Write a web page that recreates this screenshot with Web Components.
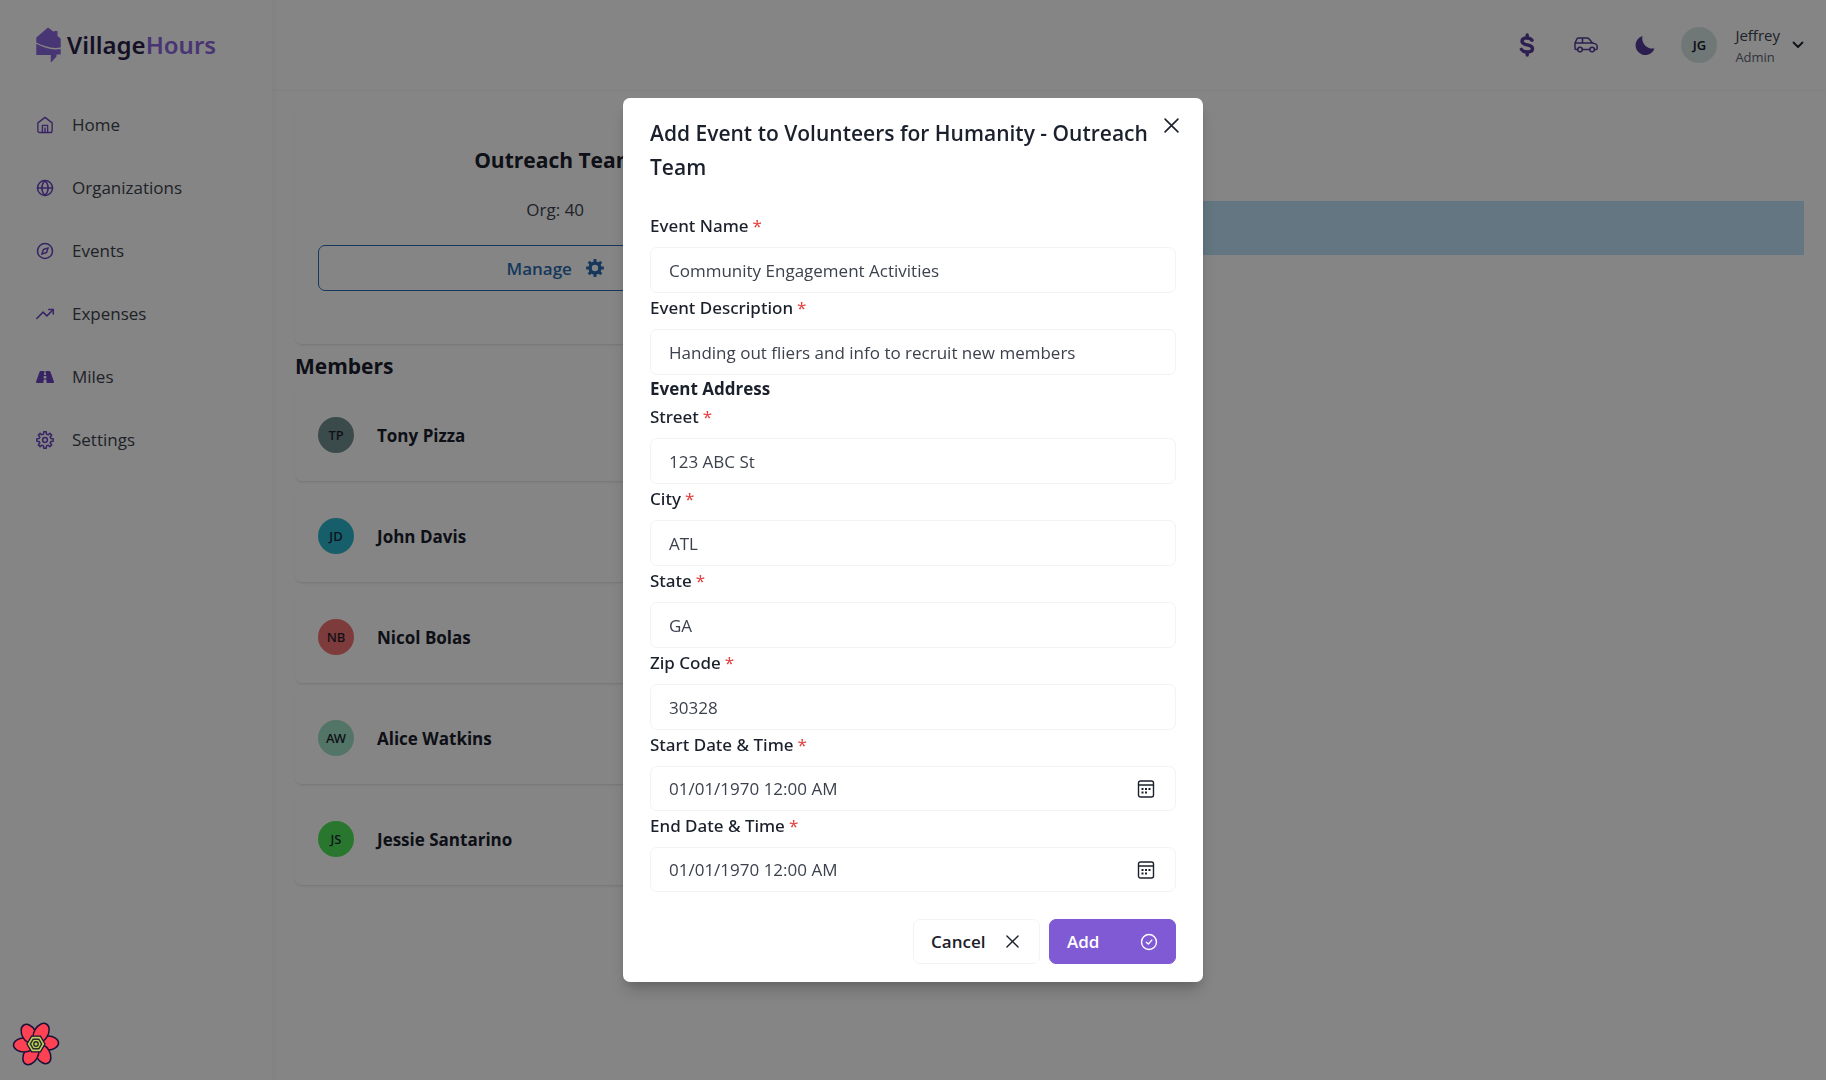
<!DOCTYPE html>
<html lang="en">
<head>
<meta charset="utf-8">
<title>VillageHours</title>
<style>
html, body { margin: 0; min-height: 100%; background: #fff; }
body { font: 17px/27px "Open Sans", "Noto Sans", sans-serif; color: #1a202c; }
</style>
</head>
<body>
<vh-app></vh-app>
<script>
const reset = `*{box-sizing:border-box} button,input{font:inherit;color:inherit;margin:0} button{cursor:pointer} h1,h2,h3,p,ul{margin:0;padding:0}`;

function define(name, render) {
  customElements.define(name, class extends HTMLElement {
    connectedCallback() {
      if (this.shadowRoot) return;
      this.attachShadow({ mode: 'open' }).innerHTML = render(this);
    }
  });
}

// Outline of an eight-toothed cog centred on 12,12.
function cog(outer, inner) {
  const points = [];
  for (let tooth = 0; tooth < 8; tooth++) {
    for (const [offset, radius] of [[-14, inner], [-9, outer], [9, outer], [14, inner]]) {
      const angle = (tooth * 45 + offset) * Math.PI / 180;
      points.push((12 + radius * Math.cos(angle)).toFixed(2) + ' ' + (12 + radius * Math.sin(angle)).toFixed(2));
    }
  }
  return 'M' + points.join('L') + 'z';
}

const line = 'fill="none" stroke="currentColor" stroke-linecap="round" stroke-linejoin="round"';
const icons = {
  home: ['0 0 24 24', `<g ${line} stroke-width="1.8"><path d="M2.5 9.2 12 1.8l9.500 7.400V19.500a2.500 2.500 0 0 1-2.500 2.500H5a2.500 2.500 0 0 1-2.500-2.500z"/><path d="M8.500 22v-9.500h7V22M12 16v6"/></g>`],
  globe: ['0 0 24 24', `<g ${line} stroke-width="2"><circle cx="12" cy="12" r="10"/><path d="M2 12h20M12 2c3 3 4.200 6.500 4.200 10S15 19 12 22c-3-3-4.200-6.500-4.200-10S9 5 12 2z"/></g>`],
  compass: ['0 0 24 24', `<g ${line} stroke-width="2"><circle cx="12" cy="12" r="10"/><path d="m16.200 7.800-2.100 6.300-6.300 2.100 2.100-6.300z"/></g>`],
  trend: ['0 0 24 24', `<g ${line} stroke-width="2"><path d="m1 18 8.500-8.500 5 5L23 6"/><path d="M17 6h6v6"/></g>`],
  road: ['0 0 576 512', `<path fill="currentColor" d="M573 402 461 88c-5-15-19-24-33-24H307l5 48c0 5-4 8-8 8h-32c-4 0-8-3-8-8l5-48H148c-14 0-28 9-33 24L3 402c-9 22 7 46 31 46h201l10-98c1-8 8-14 16-14h54c8 0 15 6 16 14l10 98h201c24 0 40-24 31-46zM260 136c0-5 4-8 8-8h40c4 0 8 3 8 8l4 43c1 7-4 13-11 13h-42c-7 0-12-6-11-13zm62 168h-68c-8 0-14-7-13-14l5-54c1-7 6-12 13-12h58c7 0 12 5 13 12l5 54c1 7-5 14-13 14z"/>`],
  settings: ['0 0 24 24', `<g ${line} stroke-width="2"><circle cx="12" cy="12" r="3.200"/><path d="${cog(11, 8)}"/></g>`],
  gear: ['0 0 24 24', `<path fill="none" stroke="currentColor" stroke-width="4.500" d="M12 5.500a6.500 6.500 0 1 1 0 13 6.500 6.500 0 0 1 0-13z"/><path fill="currentColor" fill-rule="evenodd" d="${cog(12, 8.5)}M12 7a5 5 0 1 0 0 10 5 5 0 0 0 0-10z"/>`],
  dollar: ['0 0 16 24', `<g ${line} stroke-width="3.400"><path d="M13 7.200C11.800 5.600 10 4.900 7.800 4.900 5 4.900 3 6.200 3 8.300c0 5 10.500 2.300 10.500 7.300 0 2.200-2.200 3.500-5.200 3.500-2.600 0-4.700-.9-5.900-2.700"/><path d="M8.200 2v3M8.200 19v3"/></g>`],
  car: ['0 0 24 16', `<g ${line} stroke-width="1.500"><path d="M3.600 12.500H2A1 1 0 0 1 1 11.500V6l2-4.200C3.300 1.200 3.900 1 4.500 1h8.800c.6 0 1 .2 1.400.6L18.500 6l3 .9c1 .4 1.600 1.200 1.600 2.200v2.400a1 1 0 0 1-1 1h-1.600M8.400 12.500h7.300M1.200 6h17.300M8.500 1.200V6"/><circle cx="6" cy="12.500" r="2.300"/><circle cx="18.100" cy="12.500" r="2.300"/></g>`],
  moon: ['0 0 20 20', `<path fill="currentColor" d="M7.600 1A10 10 0 0 0 19.500 13.300 9.700 9.700 0 1 1 7.600 1z"/>`],
  chevron: ['0 0 12 8', `<path ${line} stroke-width="1.800" d="m1.500 1.500 4.500 4.500 4.500-4.500"/>`],
  close: ['0 0 14 14', `<path ${line} stroke-width="1.500" d="m1 1 12 12M13 1 1 13"/>`],
  check: ['0 0 18 18', `<g ${line} stroke-width="1.400"><circle cx="9" cy="9" r="7.500"/><path d="m6.300 9.200 2 1.900 3.500-4"/></g>`],
  calendar: ['0 0 18 18', `<rect x="1.500" y="1" width="15" height="16" rx="2" ${line} stroke-width="1.400"/><path ${line} stroke-width="1.400" d="M2 5h14"/><g fill="currentColor"><rect x="8" y="8" width="2" height="2"/><rect x="11.500" y="8" width="2" height="2"/><rect x="4.500" y="11.500" width="2" height="2"/><rect x="8" y="11.500" width="2" height="2"/><rect x="4.500" y="8" width="2" height="2"/></g>`]
};

define('vh-icon', el => {
  const [box, art] = icons[el.getAttribute('name')];
  return `<style>:host{display:inline-flex;flex:none;width:18px;height:18px} svg{width:100%;height:100%;display:block}</style><svg viewBox="${box}" aria-hidden="true">${art}</svg>`;
});

define('vh-avatar', el => `<style>
:host{display:flex;flex:none;align-items:center;justify-content:center;width:36px;height:36px;border-radius:50%;background:${el.getAttribute('color')};font:${el.getAttribute('weight') || 500} 13px/18px "Noto Sans","Open Sans",sans-serif;color:#1a202c}
</style><slot></slot>`);

define('vh-logo', () => `<style>
:host{display:flex;align-items:center;gap:6px;font:600 24px/36px "Noto Sans","Open Sans",sans-serif;color:#2a1f4a}
svg{width:25px;height:36px;flex:none} b{font-weight:600;color:#8b66dc}
</style>
<svg viewBox="0 0 25 36" aria-hidden="true"><path fill="#8b66dc" d="M.3 10.500 12 .5l6 4.500V4h3.500v5l3.200 2.500V20.500C15.500 22 8.500 19.500.3 15.600z"/><path fill="#8b66dc" d="M.3 16.700C8.500 21 16 23.500 24.700 21.900V27.500h-4.200v2L15.600 35h-.8v-7H.3z"/></svg>
<span>Village<b>Hours</b></span>`);

define('vh-nav-link', el => `<style>${reset}
:host{display:block}
a{display:flex;align-items:center;gap:18px;height:63px;padding-left:36px;color:#3c424d;text-decoration:none}
vh-icon{color:#6b46c1}
</style><a href="#"><vh-icon name="${el.getAttribute('icon')}"></vh-icon><slot></slot></a>`);

define('vh-sidebar', () => `<style>${reset}
:host{display:block;width:272px;flex:none;border-right:1px solid #f8f9fb;box-shadow:1px 0 5px rgba(0,0,0,.04)}
.brand{height:90px;padding-left:36px;display:flex;align-items:center}
nav{padding-top:3px}
</style>
<div class="brand"><vh-logo></vh-logo></div>
<nav>
<vh-nav-link icon="home">Home</vh-nav-link>
<vh-nav-link icon="globe">Organizations</vh-nav-link>
<vh-nav-link icon="compass">Events</vh-nav-link>
<vh-nav-link icon="trend">Expenses</vh-nav-link>
<vh-nav-link icon="road">Miles</vh-nav-link>
<vh-nav-link icon="settings">Settings</vh-nav-link>
</nav>`);

define('vh-topbar', () => `<style>${reset}
:host{display:flex;align-items:center;justify-content:flex-end;height:90px;padding-right:22px;border-bottom:1px solid #f4f6f8}
button{border:0;background:none;padding:0;display:flex;align-items:center;text-align:left}
.tool{width:59px;height:45px;justify-content:center;color:#553c9a}
.user{gap:18px;margin-left:7px}
.who{display:block}
.name{display:block;font-size:15px;line-height:24px;color:#3c424d}
.role{display:block;font-size:13px;line-height:20px;color:#5c6675}
.menu{gap:12px;display:flex;align-items:center}
.dollar{width:16px;height:24px}.car{width:24px;height:16px}.moon{width:20px;height:20px}.chev{width:12px;height:8px;color:#1a202c}
</style>
<button class="tool" aria-label="Expenses"><vh-icon class="dollar" name="dollar"></vh-icon></button>
<button class="tool" aria-label="Mileage"><vh-icon class="car" name="car"></vh-icon></button>
<button class="tool" aria-label="Dark mode"><vh-icon class="moon" name="moon"></vh-icon></button>
<button class="user"><vh-avatar color="#d7e7e4" weight="600">JG</vh-avatar>
<span class="menu"><span class="who"><span class="name">Jeffrey</span><span class="role">Admin</span></span><vh-icon class="chev" name="chevron"></vh-icon></span></button>`);

define('vh-member', el => `<style>
:host{display:flex;align-items:center;gap:23px;height:93px;padding:0 23px;border-radius:7px;border-bottom:1px solid #e6e9ed;box-shadow:0 1px 2px rgba(0,0,0,.05);font-weight:700}
</style><vh-avatar color="${el.getAttribute('color')}">${el.getAttribute('initials')}</vh-avatar><slot></slot>`);

define('vh-team', () => `<style>${reset}
:host{display:block}
.card{display:flex;flex-direction:column;align-items:stretch;text-align:center;height:236px;padding:34px 23px 0;border-bottom:1px solid #e6e9ed;border-radius:7px;box-shadow:0 1px 2px rgba(0,0,0,.05)}
h2{font-size:21px;line-height:34px;font-weight:700}
p{margin-top:19px;color:#3c424d}
button{margin-top:22px;height:46px;border:1px solid #2b6cb0;border-radius:7px;background:none;color:#2b6cb0;font-weight:600;display:flex;align-items:center;justify-content:center;gap:14px}
h3{font-size:21px;line-height:34px;font-weight:700;margin:4px 0 6px}
.list{display:flex;flex-direction:column;gap:8px}
</style>
<section class="card"><h2>Outreach Team</h2><p>Org: 40</p><button>Manage <vh-icon name="gear"></vh-icon></button></section>
<h3>Members</h3>
<div class="list">
<vh-member initials="TP" color="#718e8e">Tony Pizza</vh-member>
<vh-member initials="JD" color="#2bb5cc">John Davis</vh-member>
<vh-member initials="NB" color="#f07171">Nicol Bolas</vh-member>
<vh-member initials="AW" color="#9de0c8">Alice Watkins</vh-member>
<vh-member initials="JS" color="#4fe55a">Jessie Santarino</vh-member>
</div>`);

define('vh-field', el => {
  const date = el.hasAttribute('date');
  return `<style>${reset}
:host{display:block}
label{display:block;font:500 17px/29px "Noto Sans","Open Sans",sans-serif;margin-bottom:7px}
i{font-style:normal;font-weight:400;color:#e53e3e;margin-left:4px}
.box{display:flex;align-items:center;height:46px;border:1px solid #f1f3f6;border-radius:7px;padding:0 18px}
:host([date]) .box{height:45px}
input{flex:1;min-width:0;border:0;outline:0;padding:0;background:none;height:27px;color:#3c424d}
button{border:0;background:none;padding:0 2px;display:flex;color:#1a202c}
</style>
<label for="f">${el.getAttribute('label')}<i aria-hidden="true">*</i></label>
<div class="box"><input id="f" type="text" required value="${el.getAttribute('value')}">${date ? '<button type="button" aria-label="Open calendar"><vh-icon name="calendar"></vh-icon></button>' : ''}</div>`;
});

define('vh-button', el => `<style>${reset}
:host{display:block}
button{display:flex;align-items:center;justify-content:space-between;width:127px;height:45px;padding:0 17px;border:1px solid #f1f3f6;border-radius:7px;background:#fff;font-weight:600}
:host([primary]) button{background:#805ad5;border-color:#805ad5;color:#fff}
:host(:not([primary])) vh-icon{width:13px;height:13px;margin-right:3px}
</style><button type="button"><slot></slot><vh-icon name="${el.getAttribute('icon')}"></vh-icon></button>`);

define('vh-event-dialog', () => `<style>${reset}
:host{position:fixed;inset:0;display:flex;align-items:center;justify-content:center;background:rgba(0,0,0,.48)}
.panel{position:relative;width:580px;max-width:100%;background:#fff;border-radius:7px;box-shadow:0 11px 17px -3px rgba(0,0,0,.2),0 5px 7px -2px rgba(0,0,0,.1)}
h2{font-size:21px;line-height:34px;font-weight:600;padding:18px 27px}
.close{position:absolute;top:9px;right:14px;width:36px;height:36px;border:0;background:none;padding:0;display:flex;align-items:center;justify-content:center}
.close vh-icon{width:15px;height:15px}
form{padding:9px 27px}
h3{font-size:17px;line-height:27px;font-weight:700}
footer{display:flex;justify-content:flex-end;gap:9px;padding:18px 27px}
</style>
<section class="panel" role="dialog" aria-modal="true" aria-labelledby="t">
<h2 id="t">Add Event to Volunteers for Humanity - Outreach Team</h2>
<button class="close" aria-label="Close"><vh-icon name="close"></vh-icon></button>
<form>
<vh-field label="Event Name" value="Community Engagement Activities"></vh-field>
<vh-field label="Event Description" value="Handing out fliers and info to recruit new members"></vh-field>
<h3>Event Address</h3>
<vh-field label="Street" value="123 ABC St"></vh-field>
<vh-field label="City" value="ATL"></vh-field>
<vh-field label="State" value="GA"></vh-field>
<vh-field label="Zip Code" value="30328"></vh-field>
<vh-field date label="Start Date &amp; Time" value="01/01/1970 12:00 AM"></vh-field>
<vh-field date label="End Date &amp; Time" value="01/01/1970 12:00 AM"></vh-field>
</form>
<footer><vh-button icon="close">Cancel</vh-button><vh-button primary icon="check">Add</vh-button></footer>
</section>`);

define('vh-query-badge', () => {
  const petals = [0, 60, 120, 180, 240, 300].map(a => `<ellipse cx="12" cy="-1" rx="10.500" ry="7" transform="rotate(${a})"/>`).join('');
  const hex = r => [0, 60, 120, 180, 240, 300].map(a => (r * Math.cos(a * Math.PI / 180)).toFixed(2) + ',' + (r * Math.sin(a * Math.PI / 180)).toFixed(2)).join(' ');
  return `<style>${reset}
:host{position:fixed;left:12px;bottom:12px}
button{border:0;background:none;padding:0;display:block} svg{display:block;width:48px;height:48px}
</style><button aria-label="Open query tools"><svg viewBox="-24 -24 48 48"><g fill="#ff4154" stroke="#1b1238" stroke-width="1.500">${petals}</g>
<polygon points="${hex(9)}" fill="#bcd05c" stroke="#1b1238" stroke-width="1.300"/><polygon points="${hex(5.6)}" fill="#bcd05c" stroke="#2a2a2a" stroke-width="1.500"/><circle r="2.200" fill="#bcd05c" stroke="#2a2a2a" stroke-width="1.400"/></svg></button>`;
});

define('vh-app', () => `<style>
:host{display:flex;min-height:100vh}
.page{flex:1;min-width:0}
main{display:grid;grid-template-columns:35fr 65fr;gap:22px;padding:18px 22px}
.notice{height:54px;margin-top:92px;background:#bee3f8}
</style>
<vh-sidebar></vh-sidebar>
<div class="page"><vh-topbar></vh-topbar>
<main><vh-team></vh-team><div><div class="notice" role="status"></div></div></main></div>
<vh-event-dialog></vh-event-dialog>
<vh-query-badge></vh-query-badge>`);
</script>
</body>
</html>
